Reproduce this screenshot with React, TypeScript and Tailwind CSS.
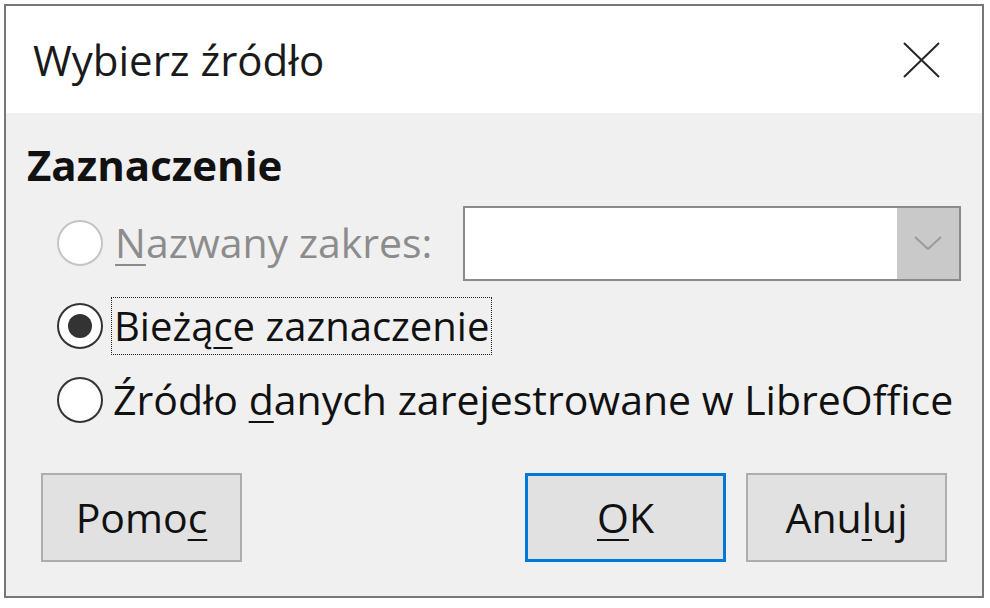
import React from 'react';

const font = { fontFamily: '"Open Sans", "Noto Sans", sans-serif' };

function Radio({ checked, disabled }: { checked?: boolean; disabled?: boolean }) {
  return (
    <span
      className={`flex h-[46px] w-[46px] shrink-0 items-center justify-center rounded-full border-2 bg-white ${
        disabled ? 'border-[#c4c4c4]' : 'border-[#333333]'
      }`}
    >
      {checked && <span className="h-[24px] w-[24px] rounded-full bg-[#333333]" />}
    </span>
  );
}

function Button({ children, primary }: { children: React.ReactNode; primary?: boolean }) {
  return (
    <button
      className={`flex h-[89px] w-[201px] items-center justify-center bg-[#e1e1e1] text-[41px] text-[#111] ${
        primary ? 'border-[3px] border-[#0078d7]' : 'border-2 border-[#adadad]'
      }`}
    >
      {children}
    </button>
  );
}

export default function App() {
  return (
    <div className="min-h-[608px] bg-white p-[4px]" style={font}>
      <div className="flex h-[594px] w-[980px] flex-col border-2 border-[#777777] bg-[#f0f0f0]">
        {/* title bar */}
        <div className="flex h-[107px] items-center justify-between bg-white pl-[27px] pr-[42px]">
          <span className="text-[42px] text-[#1a1a1a]">Wybierz źródło</span>
          <svg width="37" height="36" viewBox="0 0 37 36">
            <path d="M1 1 L36 35 M36 1 L1 35" stroke="#262626" strokeWidth="2" fill="none" />
          </svg>
        </div>

        {/* body */}
        <div className="flex flex-1 flex-col pt-[26px]">
          <div className="flex h-[50px] items-center pl-[21px] text-[42px] font-bold text-[#111]">Zaznaczenie</div>

          <div className="mt-[16px] flex h-[76px] items-center pl-[51px] pr-[21px]">
            <Radio disabled />
            <span className="ml-[12px] w-[348px] text-[41px] text-[#8c8c8c]">
              <u className="decoration-2 underline-offset-[6px]">N</u>azwany zakres:
            </span>
            <div className="flex h-[75px] flex-1 border-2 border-[#8a8a8a] bg-white">
              <div className="flex-1" />
              <div className="flex w-[62px] items-center justify-center bg-[#c9c9c9]">
                <svg width="28" height="15" viewBox="0 0 28 15">
                  <path d="M1 1 L14 13 L27 1" stroke="#9a9a9a" strokeWidth="2" fill="none" />
                </svg>
              </div>
            </div>
          </div>

          <div className="mt-[15px] flex h-[60px] items-center pl-[51px]">
            <Radio checked />
            <span className="ml-[8px] border border-dotted border-[#222] px-[2px] py-[2px] text-[40px] leading-[52px] text-[#111]">
              Bieżą<u className="decoration-2 underline-offset-[6px]">c</u>e zaznaczenie
            </span>
          </div>

          <div className="mt-[14px] flex h-[60px] items-center pl-[51px]">
            <Radio />
            <span className="ml-[10px] text-[41px] text-[#111]">
              Źródło <u className="decoration-2 underline-offset-[6px]">d</u>anych zarejestrowane w LibreOffice
            </span>
          </div>

          <div className="mt-[43px] flex items-center px-[35px]">
            <Button>
              Pomo<u className="decoration-2 underline-offset-[6px]">c</u>
            </Button>
            <div className="flex-1" />
            <Button primary>
              <u className="decoration-2 underline-offset-[6px]">O</u>K
            </Button>
            <div className="w-[20px]" />
            <Button>
              Anu<u className="decoration-2 underline-offset-[6px]">l</u>uj
            </Button>
          </div>
        </div>
      </div>
    </div>
  );
}
